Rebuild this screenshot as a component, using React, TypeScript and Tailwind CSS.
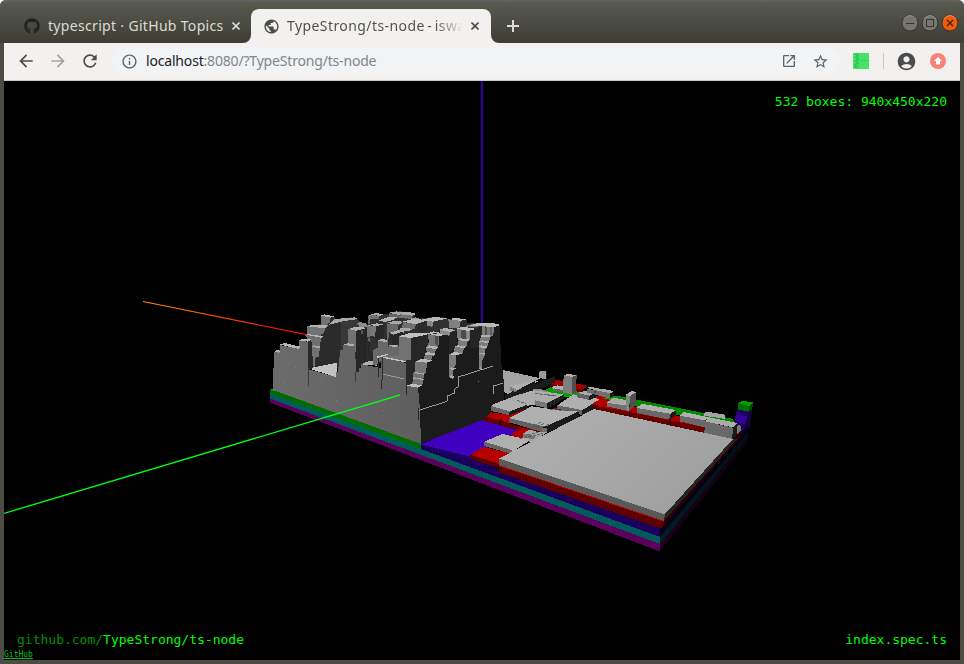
import React from "react";
import { FaGithub } from "react-icons/fa";
import {
  MdAccountCircle, MdArrowBack, MdArrowForward, MdInfoOutline,
  MdOpenInNew, MdPublic, MdRefresh, MdStarBorder,
} from "react-icons/md";

type Face = [string, string];

const TOP = "#b0b0b0";
const LEFT = "#727272";
const DARK = "#1b1b1b";

function Faces({ items, x, y }: { items: Face[]; x: number; y: number }) {
  return (
    <g transform={`translate(${x} ${y}) scale(.33333)`}>
      {items.map(([fill, points], i) => <polygon key={i} fill={fill} points={points} />)}
    </g>
  );
}

// Coordinates of each group are in thirds of a pixel from its own origin.
const farGround: Face[] = [
  ["#a4a4a4", "98,30 212,55 190,66 120,105 98,95"],
  [DARK, "104,105 136,93 138,112 104,120"],
  [TOP, "120,80 195,60 205,65 138,90"],
  [DARK, "122,83 138,93 196,62 196,90 134,112"],
  ["#7c7c7c", "120,80 138,88 138,96 120,92"],
  ["#a00000", "244,65 262,60 355,78 335,90 245,78"],
  ["#640000", "244,72 350,93 340,102 240,82"],
  [DARK, "196,73 256,48 256,65 220,84 196,90"],
  ["#9c9c9c", "208,35 218,32 230,35 230,58 208,54"],
  [DARK, "228,38 231,35 231,58 228,60"],
  ["#00a000", "218,95 240,82 330,96 318,112 280,110"],
  ["#8c8c8c", "188,88 215,88 240,96 240,105 188,98"],
  ["#b00000", "250,145 262,142 390,105 412,115 450,130 450,162 370,146 280,175"],
  ["#5f0000", "370,134 450,150 450,163 370,146"],
  ["#00b000", "400,115 430,107 450,110 450,132 412,122"],
];

const midGround: Face[] = [
  ["#4000c0", "-148,253 30,178 90,190 150,215 0,290"],
  ["#780000", "90,188 235,214 190,245 150,236 120,228 150,212"],
  ["#b80000", "30,163 48,155 120,165 185,142 185,190 120,190 88,180"],
  ["#600000", "30,163 88,179 146,200 146,213 30,179"],
  ["#b80000", "30,163 48,155 118,168 118,178 88,181"],
  ["#340000", "88,181 92,178 92,198 88,196"],
  ["#acacac", "104,120 136,107 190,91 240,97 282,104 232,129 208,134 172,137"],
  [TOP, "60,137 104,119 175,137 118,156"],
  ["#666", "60,137 118,154 118,166 60,152"],
  [DARK, "118,155 172,134 172,145 118,167"],
  ["#777", "195,121 232,129 232,145 195,136"],
  [DARK, "232,129 282,103 282,117 232,146"],
  ["#626262", "250,84 275,84 285,88 278,97 247,91"],
  ["#b0b0b0", "247,80 262,76 282,80 280,90 247,85"],
  ["#b2b2b2", "281,45 293,42 320,45 307,51"],
  ["#7e7e7e", "281,45 307,51 306,104 279,98"],
  ["#505050", "307,51 320,45 318,98 306,104"],
  [TOP, "262,136 310,103 390,117 335,152"],
  ["#656565", "262,136 335,150 335,165 262,146"],
  [DARK, "335,151 372,130 372,146 335,166"],
  ["#aaa", "322,99 345,93 378,98 358,107"],
  ["#626262", "322,99 358,107 358,120 322,112"],
  [DARK, "358,107 378,98 378,112 358,121"],
  ["#aaa", "350,84 360,80 382,85 400,87 431,93 420,101"],
  ["#707070", "350,86 420,99 418,115 350,97"],
  [DARK, "420,101 432,93 430,108 420,115"],
  ["#4b4b4b", "371,93 377,91 377,100 371,98"],
  [TOP, "118,174 185,139 250,148 325,155 225,202"],
  ["#606060", "118,174 218,199 218,217 118,187"],
  [DARK, "225,200 327,154 327,174 233,217"],
  ["#707070", "216,202 232,205 232,217 216,216"],
  ["#b00000", "120,225 145,211 155,204 187,210 160,225 165,238"],
  ["#a4a4a4", "160,220 178,209 205,216 233,216 185,248 160,238"],
  ["#777", "160,220 198,230 190,239 160,231"],
  [TOP, "43,245 97,222 182,240 125,276"],
  ["#646464", "43,245 125,270 125,282 43,258"],
  ["#b80000", "0,285 41,261 125,281 90,297 90,315"],
  ["#5c0000", "0,284 90,312 90,325 0,297"],
];

const detailMarks = [
  "192,196 214,186", "202,201 224,190", "216,202 240,190", "140,120 168,132",
  "195,100 260,108", "230,104 256,109", "150,235 220,220",
  "173,225 205,216", "242,123 242,140", "254,117 254,134", "267,110 267,126",
  "240,148 298,153", "127,277 325,174",
];

const rightGround: Face[] = [
  ["#008a00", "35,113 50,107 395,176 404,184 380,195 35,125"],
  ["#b00000", "0,117 25,117 50,130 115,143 220,165 315,186 315,218 0,155"],
  ["#640000", "0,140 90,156 315,203 315,219 210,197 0,153"],
  ["#300000", "86,148 90,145 90,169 86,168"],
  ["#300000", "208,175 212,172 212,198 208,197"],
  ["#aaa", "20,128 40,113 78,120 78,137"],
  ["#717171", "20,128 80,137 84,153 20,139"],
  ["#858585", "77,104 90,107 87,154 77,149"],
  ["#505050", "90,107 109,96 107,135 88,153"],
  ["#b0b0b0", "77,104 96,93 109,96 90,108"],
  [TOP, "110,144 125,131 228,150 210,162"],
  ["#686868", "110,144 210,161 208,179 110,159"],
  [DARK, "210,162 228,151 228,165 208,180"],
  ["#a4a4a4", "312,160 321,155 376,164 376,177 312,167"],
  [TOP, "239,167 252,156 331,173 315,182"],
  ["#686868", "239,167 315,181 315,202 239,184"],
  ["#333", "315,181 328,172 324,189 315,201"],
  ["#ababab", "315,184 326,172 413,189 398,202"],
  ["#696969", "315,184 399,203 396,240 313,219"],
  [DARK, "399,203 413,190 410,238 396,240"],
  ["#777", "413,191 424,198 423,230 410,237"],
  ["#210063", "410,149 446,155 444,210 428,224 422,220 425,202 404,184"],
  ["#35009a", "408,164 442,168 440,193 404,184"],
  ["#16003d", "446,155 457,148 447,210 424,230"],
  ["#00a000", "414,129 425,123 459,126 448,139"],
  ["#007000", "414,129 448,138 446,155 413,148"],
  ["#004800", "448,138 459,127 457,148 446,154"],
];

const castleLeft: Face[] = [
  ["#2e2e2e", "22,90 22,64 62,57 62,32 105,35 105,42 155,37 178,45 180,60 205,60 205,30 225,25 270,33 268,25 290,18 330,22 330,170 232,175 200,175 110,190 30,190"],
  [LEFT, "62,32 92,37 90,52 78,60 62,60"],
  ["#b4b4b4", "62,32 72,28 105,34 92,38"],
  [LEFT, "22,64 75,70 72,84 62,90 62,99 22,92"],
  ["#b0b0b0", "22,64 35,60 85,61 75,70"],
  ["#6f6f6f", "15,90 67,97 62,124 36,125 28,110"],
  ["#b8b8b8", "15,89 30,88 69,94 64,98"],
  [LEFT, "36,127 60,128 56,155 46,158 44,186 38,180"],
  ["#a6a6a6", "36,125 42,121 61,125 58,130"],
  ["#2b2b2b", "63,98 72,96 72,84 80,80 80,70 86,68 90,56 105,50 122,46 122,168 44,188 46,160 56,157 60,128"],
  ["#383838", "124,48 172,42 176,50 172,67 148,70 145,115 130,118 130,130 118,150 118,170 124,170"],
  ["#a9a9a9", "85,60 95,50 105,42 165,37 174,42 122,50 100,56"],
  ["#8c8c8c", "172,55 182,51 202,57 202,67 180,67"],
  ["#c2c2c2", "25,190 112,173 112,192 108,216"],
  [LEFT, "145,71 168,76 168,140 132,140 132,121 145,120"],
  ["#b2b2b2", "145,72 165,66 200,68 188,74 168,77"],
  ["#262626", "168,77 200,69 200,165 178,190 178,202 168,202"],
  ["#565656", "184,75 190,73 190,86 184,87"],
  ["#b0b0b0", "132,120 145,115 165,119 158,124"],
  [LEFT, "205,32 238,37 236,43 205,41"],
  ["#acacac", "205,31 225,25 252,28 238,37"],
  ["#6a6a6a", "205,44 250,50 248,59 205,57"],
  ["#acacac", "205,43 225,38 270,43 250,50"],
  [LEFT, "202,61 232,66 229,97 202,97"],
  ["#b0b0b0", "202,61 220,57 260,58 232,67"],
  ["#282828", "232,67 260,60 262,98 230,108 230,130 222,135 218,155 218,168 206,170 204,100 229,97"],
  ["#666", "204,98 217,99 214,110 206,110"],
  ["#686868", "222,135 232,128 232,112 242,100 264,106 264,125 298,118 298,160 265,150 232,156 232,176 218,168 218,155"],
  ["#b0b0b0", "182,178 210,167 230,170 230,182 205,180"],
];

const castleMiddle: Face[] = [
  ["#303030", "0,45 57,42 85,34 135,43 137,59 195,52 200,180 120,186 105,160 0,160"],
  [LEFT, "0,44 28,48 28,58 0,58"],
  ["#a8a8a8", "0,43 24,40 41,43 28,48"],
  ["#656565", "57,40 90,45 117,49 110,56 57,51"],
  ["#aaa", "57,38 80,34 107,40 90,46"],
  ["#a5a5a5", "88,44 110,38 136,42 120,47"],
  ["#b2b2b2", "25,61 60,50 83,51 70,60 45,66"],
  ["#777", "0,76 18,79 16,110 0,108"],
  ["#b0b0b0", "0,73 20,70 42,73 18,79"],
  ["#282828", "18,79 42,73 42,112 14,125"],
  ["#696969", "10,150 24,142 24,120 54,124 54,140 86,135 86,165 108,186 40,176 20,195 10,195"],
  ["#b0b0b0", "22,122 36,116 55,121 48,126"],
  ["#696969", "50,70 84,74 84,94 58,97 54,125 50,120"],
  ["#a8a8a8", "50,69 75,62 105,66 86,74"],
  ["#707070", "95,70 140,76 138,87 95,86"],
  ["#bcbcbc", "96,69 125,60 174,62 140,74"],
  ["#2b2b2b", "137,76 174,63 174,98 120,108 55,128 57,98 98,90"],
  ["#b0b0b0", "58,98 105,85 140,86 130,93 70,104"],
  ["#272727", "70,104 100,94 94,137 65,139"],
  ["#b0b0b0", "54,138 66,134 86,137 80,141"],
  [LEFT, "86,109 122,113 123,181 104,185 40,176 40,172 86,165"],
];

const castleRight: Face[] = [
  ["#303030", "5,50 48,42 100,36 140,38 145,45 170,39 200,45 200,55 245,53 300,60 302,170 32,170"],
  [LEFT, "0,28 38,32 36,42 0,38"],
  ["#aaa", "0,24 20,20 48,26 38,33"],
  ["#9c9c9c", "28,42 48,37 60,42 48,46"],
  ["#6e6e6e", "8,51 48,57 45,72 8,68"],
  ["#b6b6b6", "8,50 40,42 85,45 50,58"],
  ["#2b2b2b", "48,57 85,46 85,82 35,90 45,72"],
  ["#b8b8b8", "65,44 105,36 143,40 100,50"],
  ["#8a8a8a", "82,48 100,50 97,65 82,63"],
  ["#303030", "100,50 143,41 148,68 97,78"],
  ["#808080", "145,43 182,47 179,70 148,68"],
  ["#bababa", "145,42 170,39 200,43 182,48"],
  ["#2a2a2a", "182,48 200,44 200,62 178,70"],
  ["#a8a8a8", "0,70 18,68 38,72 28,77 0,80"],
  [LEFT, "-4,94 32,98 32,168 -4,164"],
  ["#c0c0c0", "-4,94 25,85 85,83 85,90 32,99"],
  [DARK, "60,417 60,315 18,245 32,168 32,99 85,88 120,76 160,80 200,88 240,70 300,60 303,175 307,190 312,235 312,285 275,300 272,325 242,347"],
  ["#272727", "32,99 84,89 84,114 77,126 74,146 66,160 50,170 46,240 16,246 17,166 32,164"],
  // first stair
  ["#747474", "85,88 118,92 118,115 113,128 108,132 103,150 97,153 93,168 82,172 77,204 72,208 67,242 37,236 40,204 46,200 46,170 72,165 74,148 80,142 78,128 86,112"],
  ["#4c4c4c", "104,93 116,95 114,120 104,118"],
  ["#bababa", "82,86 100,79 140,88 118,94"],
  ["#303030", "100,84 115,86 112,88 98,86"],
  ["#b2b2b2", "78,128 88,121 115,126 108,132"],
  ["#b2b2b2", "72,148 82,141 108,146 102,152"],
  ["#bababa", "46,170 65,161 98,166 80,173"],
  ["#aaa", "40,204 46,201 76,206 73,209"],
  ["#aaa", "37,220 43,217 73,222 70,225"],
  // second stair
  ["#8b8b8b", "120,75 150,81 148,92 120,87"],
  ["#b0b0b0", "117,74 135,69 168,75 152,81"],
  ["#242424", "152,81 168,76 172,118 160,130 148,148 148,92"],
  ["#7c7c7c", "172,72 212,78 210,103 203,108 200,124 192,128 188,145 168,150 168,178 160,194 160,215 153,220 148,215 148,148 162,145 164,126 173,121 176,105 172,98"],
  ["#4c4c4c", "184,75 197,77 197,103 184,101"],
  ["#929292", "200,78 208,79 207,101 200,101"],
  ["#bababa", "170,71 187,65 232,72 212,79"],
  ["#b0b0b0", "172,105 182,100 209,104 203,109"],
  ["#b0b0b0", "163,126 172,121 200,124 195,129"],
  ["#bababa", "148,148 162,140 188,145 170,151"],
  ["#aaa", "148,192 155,187 168,190 160,196"],
  ["#aaa", "148,217 155,211 164,215 158,221"],
  // third stair
  ["#777", "198,62 220,57 240,60 230,67 200,67"],
  ["#7c7c7c", "245,60 282,64 280,90 272,95 268,108 262,125 257,128 255,150 246,167 246,190 236,194 236,126 238,110 240,94 245,90"],
  ["#515151", "254,62 262,63 262,89 254,89"],
  ["#606060", "271,64 275,64 275,91 271,91"],
  ["#bababa", "208,62 232,54 280,54 302,60 282,66 235,63"],
  ["#242424", "210,76 230,72 245,63 245,90 238,110 235,128 210,128"],
  ["#b0b0b0", "239,94 248,89 274,92 269,97"],
  ["#b0b0b0", "237,110 246,106 269,109 262,114"],
  ["#b0b0b0", "236,126 244,121 263,125 257,130"],
  ["#aaa", "236,146 244,143 257,146 252,149"],
  ["#999", "236,190 241,186 247,190 243,194"],
];

const frontWall =
  "273,390 272.7,368 274,368 274,352 280,350 280,345 299,349 299,340 308,342 308,369 336,377 336,372 338,372 338,367 339,367 340,350 343,350 343,345 355,346 356,372 359,372 359,368 361,368 361,364 375,367 381,368 381,357 406,363 407,385 418,387 420,410 421,444";

function Scene() {
  return (
    <svg className="block h-full w-full" viewBox="4 81 956 579" shapeRendering="crispEdges">
      <defs>
        <linearGradient id="axis" x1="0" x2="1">
          <stop offset="0" stopColor="#ff9800" /><stop offset=".75" stopColor="#ff1800" /><stop offset="1" stopColor="#f00" />
        </linearGradient>
        <linearGradient id="slab" x1="0" x2="1" y1="0" y2=".5">
          <stop offset="0" stopColor="#b2b2b2" /><stop offset="1" stopColor="#a0a0a0" />
        </linearGradient>
        <linearGradient id="wall" x1="0" x2="1">
          <stop offset="0" stopColor="#6c6c6c" /><stop offset="1" stopColor="#5e5e5e" />
        </linearGradient>
        <linearGradient id="fade" x1="0" x2="1">
          <stop offset="0" stopColor="#000" stopOpacity="0" /><stop offset="1" stopColor="#000" stopOpacity=".45" />
        </linearGradient>
      </defs>
      <path d="M482 81V324" stroke="#3000a8" strokeWidth="2" />
      <polygon points="143,301 320,336.7 320,338 143,302" fill="url(#axis)" shapeRendering="auto" />

      {/* stacked base layers */}
      <polygon fill="#5b005b" points="270,398 660,544 660,551.5 270,402.5" />
      <polygon fill="#005c5c" points="270,393 660,536.5 660,544 270,398.5" />
      <polygon fill="#006c00" points="270,390 275,389 421,442 421,449 270,393.5" />
      <polygon fill="#00d000" points="270,390 275,388 275,391" />
      <polygon fill="#1a005c" points="421,443 470,455 500,468 660,527 660,537 421,449" />
      <Faces items={farGround} x={470} y={360} />
      <Faces items={rightGround} x={600} y={360} />
      <Faces items={midGround} x={470} y={360} />
      <g transform="translate(470 360) scale(.33333)" stroke="#444" strokeWidth="2" strokeDasharray="10 3" fill="none">
        {detailMarks.map((p) => <polyline key={p} points={p} />)}
      </g>

      <polygon fill="#1c001c" points="660,544 748,436 748,442 660,551" />
      <polygon fill="#001e20" points="660,536 748,431 748,437 660,544" />
      <polygon fill="#08001e" points="661,528 748,425 748,432 660,537" />
      <polygon fill="#2c0000" points="663,520 741,430 741,437 661,529" />
      <polygon fill="url(#fade)" points="660,520 748,430 748,442 660,551" />
      <polygon fill="#5c0000" points="498,464 664,521 662,529 498,472" />
      <polygon fill="#b80000" points="499,463 664,520 664,522 499,466" />
      <path d="M498 464v8" stroke="#260000" />
      <polygon fill="#595959" points="499,458.5 665,514 664,521 499,465" />
      <polygon fill="url(#slab)" points="499,458.5 594,409 733,439 665,514.5" />
      <polygon fill="#242424" points="665,514 733,439 737,439 664,521" />

      {/* fortress */}
      <Faces items={castleLeft} x={300} y={305} />
      <Faces items={castleMiddle} x={370} y={300} />
      <Faces items={castleRight} x={400} y={305} />
      <polygon fill="url(#wall)" points={frontWall} />
      <g transform="translate(260 300) scale(.33333)">
        <polygon fill="#b5b5b5" points="43,154 50,150 62,153 57,158" />
        <polygon fill="#b5b5b5" points="60,134 75,129 121,140 116,147" />
        <polygon fill="#b5b5b5" points="118,121 127,116 155,118 144,125" />
        <polygon fill="#292929" points="144,125 154,119 160,204 145,210" />
        <polygon fill="#b0b0b0" points="249,134 263,130 286,135 276,139" />
        <path d="M145 205V258M287 215V247" stroke="#3c3c3c" strokeWidth="3" />
      </g>
      <g transform="translate(370 300) scale(.33333)" fill="none">
        <path d="M20 172L55 163M40 172L107 185" stroke="#c4c4c4" strokeWidth="4" />
        <path d="M38 222L103 237" stroke="#a4a4a4" strokeWidth="2.5" />
        <path d="M37 172V225L34 267M109 187V285M146 325V360" stroke="#292929" strokeWidth="3" />
        <path d="M25 175V230" stroke="#292929" strokeWidth="3" />
        <path d="M110 257L128 251L157 257L143 263Z" fill="#c0c0c0" />
        <path d="M146 331L232 304V288L254 279V266L265 262V231L328 211L370 198M370 283V258L400 249" stroke="#999" strokeWidth="3" />
      </g>
      <g fill="#828282">
        {[[284,383],[322,382],[336,400],[383,410],[295,367],[478,381]].map(([x, y]) => (
          <rect key={`${x}-${y}`} x={x} y={y} width="1" height="1" />
        ))}
      </g>
      <polygon points="4,512.7 400,394.3 400,395.7 4,514.1" fill="#00ff16" shapeRendering="auto" />
    </svg>
  );
}

function WindowButton({ kind }: { kind: "min" | "max" | "close" }) {
  const close = kind === "close";
  return (
    <svg className="size-[18px]" viewBox="0 0 18 18" fill="none">
      <circle cx="9" cy="9" r="8" fill={close ? "#ee5b0b" : "#77766e"} stroke="#34342e" />
      <path d="M3 5a7 7 0 0 1 12 0" stroke={close ? "#ff9a57" : "#96958b"} />
      {kind === "min" && <path d="M5 9.5h8" stroke="#35352f" />}
      {kind === "max" && <rect x="5.5" y="5.5" width="7" height="7" stroke="#35352f" />}
      {close && <path d="m6 6 6 6m0-6-6 6" stroke="#4a2410" strokeWidth="1.4" />}
    </svg>
  );
}

function TabClose() {
  return (
    <svg className="size-2 shrink-0" viewBox="0 0 8 8">
      <path d="m.5.5 7 7m0-7-7 7" stroke="currentColor" strokeWidth="1.6" />
    </svg>
  );
}

function TitleBar() {
  return (
    <header className="flex h-[43px] items-end border-t-2 border-[#606060] bg-linear-to-b from-[#595a4e] to-[#3d3d36] pl-[4px]">
      <div className="flex h-[34px] w-[239px] items-center pl-5 text-[#dfdbd2]">
        <FaGithub className="mr-2 size-4 shrink-0 text-[#22221f]" />
        <span className="w-[176px] pb-[2px] text-[14px] tracking-[0.32px] whitespace-nowrap">typescript · GitHub Topics</span>
        <div className="ml-2 flex"><TabClose /></div>
      </div>
      <svg className="h-2 w-2" viewBox="0 0 8 8"><path d="M8 0v8H0a8 8 0 0 0 8-8" fill="#f2f1f0" /></svg>
      <div className="flex h-[34px] w-[240px] items-center rounded-t-lg bg-[#f2f1f0] pl-3 text-[#4c4c4c]">
        <MdPublic className="mr-[7px] size-[17px] shrink-0" />
        <span className="w-[176px] bg-linear-to-r from-[#4c4c4c] from-84% to-[#f2f1f0] bg-clip-text pb-[2px] text-[14px] tracking-[0.42px] whitespace-nowrap text-transparent [word-spacing:-1.5px]">TypeStrong/ts-node - iswa</span>
        <div className="ml-2 flex"><TabClose /></div>
      </div>
      <svg className="h-2 w-2" viewBox="0 0 8 8"><path d="M0 0v8h8a8 8 0 0 1-8-8" fill="#f2f1f0" /></svg>
      <svg className="mb-[11px] ml-2 size-3" viewBox="0 0 12 12"><path d="M6 0v12M0 6h12" stroke="#dfdbd2" strokeWidth="2" /></svg>
      <div className="mr-[5px] mb-[11px] ml-auto flex gap-[2px]">
        <WindowButton kind="min" /><WindowButton kind="max" /><WindowButton kind="close" />
      </div>
    </header>
  );
}

function Toolbar() {
  return (
    <nav className="flex h-[38px] shrink-0 items-center border-b border-[#c5cbc5] bg-[#f2f1f0] pb-px pl-3 text-[#4c4c4c]">
      <MdArrowBack className="size-5" />
      <MdArrowForward className="ml-3 size-5 text-[#a3a3a3]" />
      <MdRefresh className="ml-3 size-5" />
      <div className="ml-3 flex h-7 w-[728px] items-center rounded-full bg-[#f1f3f4] pl-[9px] text-[#5f6368]">
        <MdInfoOutline className="size-[17px]" />
        <span className="ml-2 pb-px text-[14px] tracking-[-0.18px] text-[#80868b]"><span className="text-[#202124]">localhost</span>:8080/?TypeStrong/ts-node</span>
        <MdOpenInNew className="mr-[15px] ml-auto size-4" />
        <MdStarBorder className="mr-[11px] size-[17px]" />
      </div>
      <svg className="ml-[13px] size-4" viewBox="0 0 16 16">
        <path d="M0 0h16v16H0z" fill="#46e366" />
        <path d="M2 1h3v2H3v2h2v2H3v2h2v2H2v3h3" fill="none" stroke="#20b84b" />
        <path d="M5 0v16M0 7.5h16" stroke="#32ce57" strokeWidth=".7" />
      </svg>
      <div className="ml-[14px] h-4 w-px bg-[#c8c8c8]" />
      <MdAccountCircle className="ml-3 size-[21px]" />
      <svg className="ml-[13px] size-4" viewBox="0 0 16 16">
        <circle cx="8" cy="8" r="8" fill="#f88277" /><path d="M8 4 4 8h2v3.5h4V8h2z" fill="#fff" />
      </svg>
    </nav>
  );
}

export default function App() {
  return (
    <div className="flex h-[664px] w-[964px] flex-col overflow-hidden rounded-t-md bg-[#4d4c44] font-['Noto_Sans','Open_Sans',sans-serif]">
      <TitleBar />
      <div className="mx-1 mb-1 flex min-h-0 flex-1 flex-col">
        <Toolbar />
        <main className="relative min-h-0 flex-1 bg-black font-['DejaVu_Sans_Mono',monospace] text-[13px] leading-4 text-[#00ff00]">
          <Scene />
          <div className="absolute top-[13px] right-[13px]">532 boxes: 940x450x220</div>
          <div className="absolute bottom-[12px] left-[13px]"><span className="text-[#009000]">github.com/</span>TypeStrong/ts-node</div>
          <div className="absolute right-[13px] bottom-[12px]">index.spec.ts</div>
          <a className="absolute bottom-0 left-0 text-[8px] leading-[10px] text-[#00c018] underline">GitHub</a>
        </main>
      </div>
    </div>
  );
}
